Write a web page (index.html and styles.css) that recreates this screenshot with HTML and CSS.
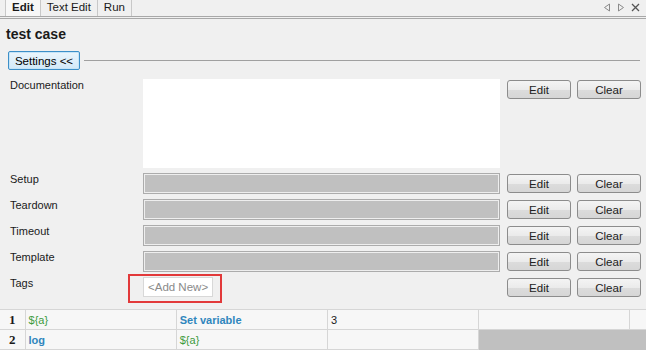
FILE: index.html
```html
<!DOCTYPE html>
<html lang="en">

<head>
    <meta charset="UTF-8">
    <meta name="viewport" content="width=device-width, initial-scale=1.0">
    <title>test case</title>
    <link rel="stylesheet" href="styles.css">
</head>

<body>
    <div class="tabbar">
        <div class="tabs">
            <span class="tab active">Edit</span>
            <span class="tab">Text Edit</span>
            <span class="tab">Run</span>
        </div>
        <div class="tab-tools">
            <svg width="8" height="9" viewBox="0 0 8 9"><path d="M6.5 1 L1.5 4.5 L6.5 8 Z" fill="none" stroke="#8a8a8a" stroke-width="1"/></svg>
            <svg width="8" height="9" viewBox="0 0 8 9"><path d="M1.5 1 L6.5 4.5 L1.5 8 Z" fill="none" stroke="#8a8a8a" stroke-width="1"/></svg>
            <svg width="9" height="9" viewBox="0 0 9 9"><path d="M1 1 L8 8 M8 1 L1 8" stroke="#555" stroke-width="1.3"/></svg>
        </div>
    </div>

    <h1 class="title">test case</h1>

    <div class="settings-bar">
        <button class="settings-btn">Settings &lt;&lt;</button>
        <div class="settings-line"></div>
    </div>

    <div class="settings">
        <div class="label">Documentation</div>
        <div class="doc"></div>
        <div class="actions"><button class="btn">Edit</button><button class="btn">Clear</button></div>

        <div class="label">Setup</div>
        <div class="field"></div>
        <div class="actions"><button class="btn">Edit</button><button class="btn">Clear</button></div>

        <div class="label">Teardown</div>
        <div class="field"></div>
        <div class="actions"><button class="btn">Edit</button><button class="btn">Clear</button></div>

        <div class="label">Timeout</div>
        <div class="field"></div>
        <div class="actions"><button class="btn">Edit</button><button class="btn">Clear</button></div>

        <div class="label">Template</div>
        <div class="field"></div>
        <div class="actions"><button class="btn">Edit</button><button class="btn">Clear</button></div>

        <div class="label">Tags</div>
        <div class="tags">
            <span class="add-new">&lt;Add New&gt;</span>
            <div class="highlight"></div>
        </div>
        <div class="actions"><button class="btn">Edit</button><button class="btn">Clear</button></div>
    </div>

    <table class="grid">
        <tr>
            <th>1</th>
            <td class="var">${a}</td>
            <td class="kw">Set variable</td>
            <td>3</td>
            <td></td>
            <td class="last"></td>
        </tr>
        <tr>
            <th>2</th>
            <td class="kw">log</td>
            <td class="var">${a}</td>
            <td></td>
            <td class="empty"></td>
            <td class="empty last"></td>
        </tr>
    </table>
</body>

</html>
```

FILE: styles.css
```css
* {
    margin: 0;
    padding: 0;
    box-sizing: border-box;
}

body {
    background-color: #f0f0f0;
    font-family: 'Liberation Sans', Arial, sans-serif;
    font-size: 11px;
    color: #1a1a1a;
    width: 646px;
    height: 350px;
    overflow: hidden;
}

/* Tabs */

.tabbar {
    display: flex;
    justify-content: space-between;
    height: 19px;
    border-bottom: 3px double #a8a8a8;
}

.tabs {
    display: flex;
    padding-left: 5px;
}

.tab {
    height: 16px;
    line-height: 15px;
    padding: 0 6px;
    border-right: 1px solid #c8c8c8;
    font-size: 11.5px;
}

.tab.active {
    font-weight: bold;
    background-color: #f7f7f7;
    border-left: 1px solid #c8c8c8;
}

.tab-tools {
    display: flex;
    gap: 6px;
    align-items: flex-start;
    padding: 3px 6px 0 0;
}

.title {
    font-size: 14px;
    font-weight: bold;
    padding: 7px 0 0 6px;
    height: 32px;
}

/* Settings toggle */

.settings-bar {
    display: flex;
    align-items: center;
    padding-left: 8px;
    padding-right: 6px;
    gap: 4px;
}

.settings-btn {
    width: 72px;
    height: 19px;
    font-family: inherit;
    font-size: 11.5px;
    border: 1px solid #3c8fc8;
    border-radius: 2px;
    background: linear-gradient(#eaf5fc, #d2e9f8);
    box-shadow: inset 0 0 0 1px #c6e4f7;
}

.settings-line {
    flex: 1;
    height: 1px;
    background-color: #a0a0a0;
}

/* Settings grid */

.settings {
    display: grid;
    grid-template-columns: 136px 357px 134px;
    grid-template-rows: 89px repeat(5, 21px);
    column-gap: 7px;
    row-gap: 5px;
    margin-top: 9px;
}

.label {
    padding: 0 0 0 10px;
}

.doc {
    background-color: #ffffff;
}

.field {
    background-color: #c0c0c0;
    border: 1px solid #acacac;
    box-shadow: inset 0 0 0 1px #eeeeee;
}

.actions {
    display: flex;
    gap: 6px;
    align-items: flex-start;
    padding-top: 1px;
}

.btn {
    width: 64px;
    height: 19px;
    font-family: inherit;
    font-size: 11.5px;
    color: #222;
    border: 1px solid #8c8c8c;
    border-radius: 3px;
    background: linear-gradient(#f4f4f4 0%, #ebebeb 50%, #dcdcdc 51%, #d6d6d6 100%);
}

.tags {
    position: relative;
}

.add-new {
    display: inline-block;
    height: 20px;
    line-height: 18px;
    padding: 0 4px;
    color: #8a8a8a;
    background-color: #ffffff;
    border: 1px solid #d8d8d8;
    font-size: 11.5px;
}

.highlight {
    position: absolute;
    left: -15px;
    top: -3px;
    width: 94px;
    height: 29px;
    border: 2px solid #e2393a;
}

/* Test table */

.grid {
    border-collapse: collapse;
    margin-top: 11px;
    table-layout: fixed;
    width: 646px;
}

.grid th,
.grid td {
    height: 20px;
    border: 1px solid #d6d6d6;
    background-color: #f7f7f7;
    text-align: left;
    padding: 0 3px;
    font-size: 11px;
}

.grid th {
    width: 25px;
    font-family: 'Liberation Serif', serif;
    font-size: 13px;
    text-align: center;
    border-left: none;
}

.grid td {
    width: 151px;
}

.grid td.last {
    width: 16px;
    border-right: none;
}

.grid td.var {
    color: #3d9b3d;
}

.grid td.kw {
    color: #2f86bd;
    font-weight: bold;
}

.grid td.empty {
    background-color: #c0c0c0;
    border-color: #c0c0c0;
}
```
